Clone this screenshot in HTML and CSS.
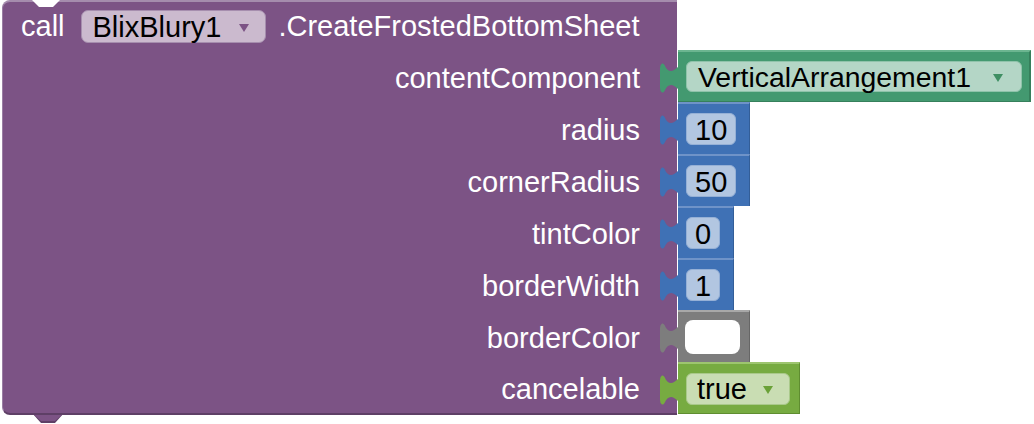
FILE: index.html
```html
<!DOCTYPE html>
<html lang="en">
<head>
    <meta charset="UTF-8">
    <title>CreateFrostedBottomSheet</title>
    <link rel="stylesheet" href="styles.css">
</head>
<body>
    <div class="canvas">
        <div class="call-wrap">
            <div class="call-block">
                <span class="notch-top"></span>
                <div class="header">
                    <span class="label">call</span>
                    <span class="field field-purple">BlixBlury1<span class="arrow"></span></span>
                    <span class="label method">.CreateFrostedBottomSheet</span>
                </div>
                <div class="params">
                    <div class="param">contentComponent</div>
                    <div class="param">radius</div>
                    <div class="param">cornerRadius</div>
                    <div class="param">tintColor</div>
                    <div class="param">borderWidth</div>
                    <div class="param">borderColor</div>
                    <div class="param">cancelable</div>
                </div>
            </div>
            <svg class="tab-bottom" width="32" height="10" viewBox="0 0 32 10"><path d="M0,0 L32,0 L23,10 L9,10 Z" fill="#5e3f66"/><path d="M0,0 L32,0 L23,8 L9,8 Z" fill="#7c5385"/></svg>
        </div>

        <div class="inputs">
            <div class="block block-component">
                <svg class="plug" viewBox="0 0 19 30"><path d="M19,3 Q14,8 11,8 Q7,8 4.5,2 Q3.5,0 2,0.5 Q0,1.5 0,5 L0,25 Q0,28.5 2,29.5 Q3.5,30 4.5,28 Q7,22 11,22 Q14,22 19,27 Z"/></svg>
                <span class="field field-wide">VerticalArrangement1<span class="arrow"></span></span>
            </div>
            <div class="block block-math wide2">
                <svg class="plug" viewBox="0 0 19 30"><path d="M19,3 Q14,8 11,8 Q7,8 4.5,2 Q3.5,0 2,0.5 Q0,1.5 0,5 L0,25 Q0,28.5 2,29.5 Q3.5,30 4.5,28 Q7,22 11,22 Q14,22 19,27 Z"/></svg>
                <span class="field num">10</span>
            </div>
            <div class="block block-math wide2">
                <svg class="plug" viewBox="0 0 19 30"><path d="M19,3 Q14,8 11,8 Q7,8 4.5,2 Q3.5,0 2,0.5 Q0,1.5 0,5 L0,25 Q0,28.5 2,29.5 Q3.5,30 4.5,28 Q7,22 11,22 Q14,22 19,27 Z"/></svg>
                <span class="field num">50</span>
            </div>
            <div class="block block-math wide1">
                <svg class="plug" viewBox="0 0 19 30"><path d="M19,3 Q14,8 11,8 Q7,8 4.5,2 Q3.5,0 2,0.5 Q0,1.5 0,5 L0,25 Q0,28.5 2,29.5 Q3.5,30 4.5,28 Q7,22 11,22 Q14,22 19,27 Z"/></svg>
                <span class="field num">0</span>
            </div>
            <div class="block block-math wide1">
                <svg class="plug" viewBox="0 0 19 30"><path d="M19,3 Q14,8 11,8 Q7,8 4.5,2 Q3.5,0 2,0.5 Q0,1.5 0,5 L0,25 Q0,28.5 2,29.5 Q3.5,30 4.5,28 Q7,22 11,22 Q14,22 19,27 Z"/></svg>
                <span class="field num">1</span>
            </div>
            <div class="block block-color">
                <svg class="plug" viewBox="0 0 19 30"><path d="M19,3 Q14,8 11,8 Q7,8 4.5,2 Q3.5,0 2,0.5 Q0,1.5 0,5 L0,25 Q0,28.5 2,29.5 Q3.5,30 4.5,28 Q7,22 11,22 Q14,22 19,27 Z"/></svg>
                <span class="swatch"></span>
            </div>
            <div class="block block-logic">
                <svg class="plug" viewBox="0 0 19 30"><path d="M19,3 Q14,8 11,8 Q7,8 4.5,2 Q3.5,0 2,0.5 Q0,1.5 0,5 L0,25 Q0,28.5 2,29.5 Q3.5,30 4.5,28 Q7,22 11,22 Q14,22 19,27 Z"/></svg>
                <span class="field">true<span class="arrow"></span></span>
            </div>
        </div>
    </div>
</body>
</html>
```

FILE: styles.css
```css
body {
    margin: 0;
    background: white;
    font-family: "Liberation Sans", Arial, sans-serif;
    font-size: 29px;
}
.canvas {
    display: flex;
    align-items: flex-start;
    padding-left: 2px;
}
.call-wrap {
    display: flex;
    flex-direction: column;
}
.call-block {
    position: relative;
    width: 674px;
    background: #7c5385;
    border-top: 2px solid #a58cad;
    border-left: 1px solid #9a7ea3;
    border-bottom: 2px solid #5e3f66;
    border-radius: 8px 0 0 8px;
    color: white;
}
.notch-top {
    position: absolute;
    top: -2px;
    left: 29px;
    width: 28px;
    height: 7px;
    background: white;
    clip-path: polygon(0 0, 100% 0, 75% 100%, 25% 100%);
}
.tab-bottom {
    display: block;
    margin-top: -2px;
    margin-left: 30px;
}
.header {
    display: flex;
    align-items: center;
    height: 49px;
    padding-left: 18px;
}
.method {
    margin-left: 12px;
}
.params {
    display: flex;
    flex-direction: column;
}
.param {
    height: 52px;
    display: flex;
    align-items: center;
    justify-content: flex-end;
    padding-top: 2px;
    padding-right: 37px;
    box-sizing: border-box;
}
.param:last-child {
    height: 50px;
}
.field {
    display: flex;
    align-items: center;
    height: 31px;
    padding: 2px 10px 0;
    border-radius: 6px;
    color: black;
    box-sizing: border-box;
}
.field-purple {
    height: 33px;
    margin-left: 16px;
    padding: 2px 16px 0 11px;
    background: #cbbace;
    border: 1px solid #a68eae;
    border-radius: 7px;
}
.arrow {
    width: 0;
    height: 0;
    margin-left: 18px;
    border-left: 5px solid transparent;
    border-right: 5px solid transparent;
    border-top: 8px solid #7c5385;
}
.inputs {
    display: flex;
    flex-direction: column;
    align-items: flex-start;
    margin-top: 50px;
    margin-left: 1px;
}
.block {
    position: relative;
    height: 52px;
    display: flex;
    align-items: center;
    padding-left: 8px;
    box-sizing: border-box;
}
.plug {
    position: absolute;
    left: -18px;
    top: 11px;
    width: 19px;
    height: 30px;
}
.plug path {
    fill: currentColor;
}
.block-component {
    width: 353px;
    background: #439970;
    border-top: 2px solid #6cb590;
    border-right: 2px solid #36805c;
    border-bottom: 1px solid #36805c;
    color: #439970;
}
.block-component .field {
    width: 336px;
    padding-left: 11px;
    font-size: 28.4px;
    background: #b4d6c6;
    border: 1px solid #8fc3aa;
}
.block-component .arrow {
    margin-left: auto;
    margin-right: 8px;
    border-top-color: #3f8f63;
}
.block-math {
    background: #3f71b5;
    border-top: 2px solid #6f93c8;
    border-right: 1px solid #335e98;
    color: #3f71b5;
}
.wide2 {
    width: 72px;
}
.wide1 {
    width: 56px;
}
.block-math .field {
    height: 32px;
    padding: 2px 8px 0;
    background: #b2c6e1;
    border: 1px solid #95b0d6;
}
.block-color {
    width: 72px;
    background: #7d7d7d;
    border-top: 2px solid #a8a8a8;
    border-right: 1px solid #666666;
    color: #7d7d7d;
    padding-left: 7px;
}
.swatch {
    width: 55px;
    height: 34px;
    background: white;
    border-radius: 8px;
}
.block-logic {
    width: 122px;
    background: #77ab41;
    border-top: 2px solid #9dc56f;
    border-right: 1px solid #5f8d30;
    border-bottom: 1px solid #5f8d30;
    color: #77ab41;
}
.block-logic .field {
    width: 104px;
    height: 32px;
    padding-left: 10px;
    background: #c9ddb3;
    border: 1px solid #a9c98a;
}
.block-logic .arrow {
    margin-left: 16px;
    border-top-color: #6aa137;
}
```
